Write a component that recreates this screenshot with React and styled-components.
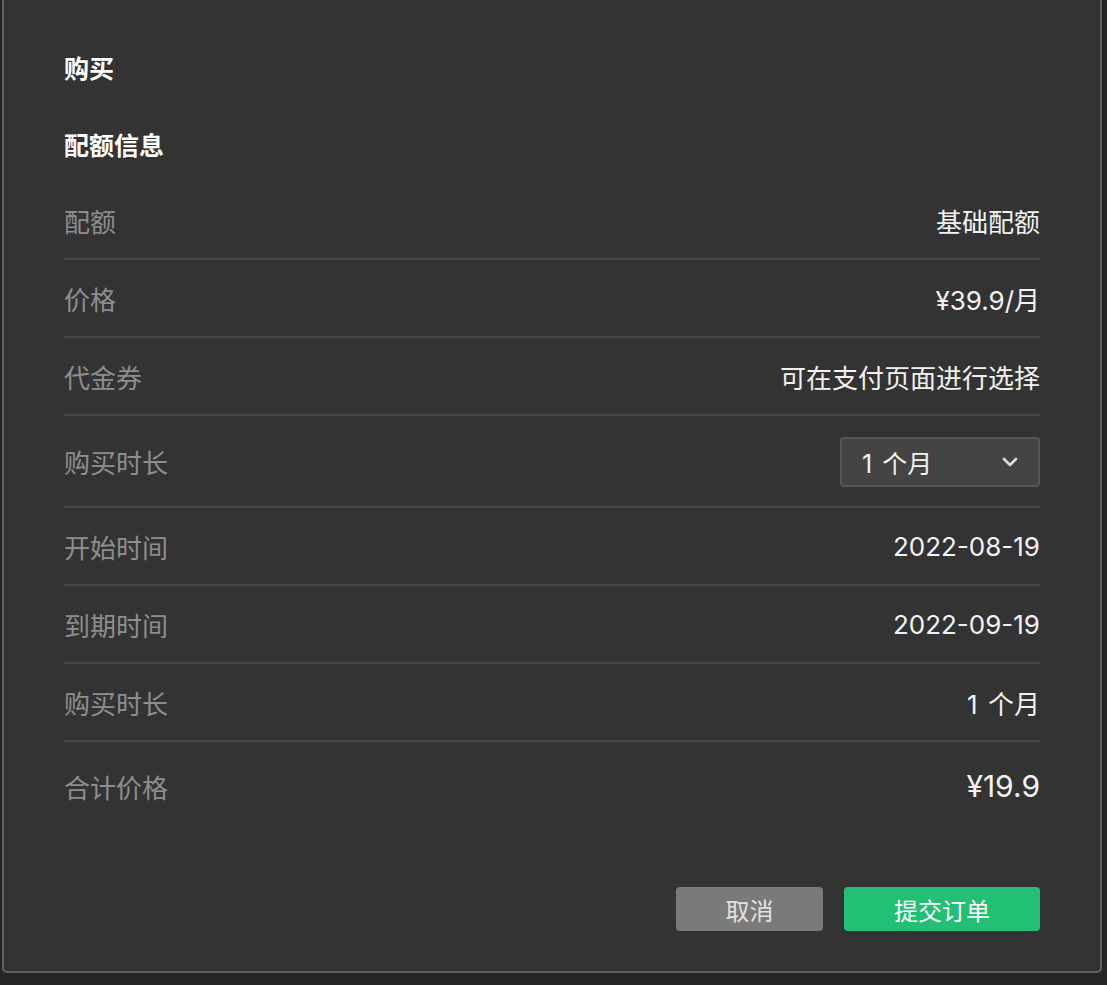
import React from 'react';
import styled, { createGlobalStyle } from 'styled-components';

const GlobalStyle = createGlobalStyle`
  html, body {
    margin: 0;
    padding: 0;
    background: #262626;
  }
  body {
    font-family: Inter, "Noto Sans CJK SC", "Noto Sans", sans-serif;
    -webkit-font-smoothing: antialiased;
  }
`;

const Page = styled.div`
  width: 1107px;
  height: 985px;
  padding-left: 2px;
  box-sizing: border-box;
  overflow: hidden;
`;

const Dialog = styled.div`
  width: 1100px;
  height: 973px;
  box-sizing: border-box;
  background: #333333;
  border: 2px solid #5f5f5f;
  border-top: none;
  border-radius: 0 0 5px 5px;
  padding: 51px 60px 0 60px;
  display: flex;
  flex-direction: column;
`;

const Title = styled.h1`
  margin: 0;
  font-size: 25px;
  line-height: 36px;
  font-weight: 700;
  color: #ffffff;
`;

const SectionTitle = styled.h2`
  margin: 41px 0 18px;
  font-size: 25px;
  line-height: 36px;
  font-weight: 700;
  color: #ffffff;
`;

const Row = styled.div`
  display: flex;
  align-items: center;
  justify-content: space-between;
  height: ${p => p.$height || 78}px;
  box-sizing: border-box;
  border-bottom: ${p => (p.$last ? 'none' : '2px solid #474747')};
  padding-top: ${p => (p.$last ? 0 : 1)}px;
`;

const Label = styled.span`
  font-size: 26px;
  color: #8e8e8e;
`;

const Value = styled.span`
  font-size: ${p => (p.$big ? 30 : 26)}px;
  color: #f2f2f2;
  font-weight: 400;
  word-spacing: 3px;
`;

const Select = styled.button`
  width: 200px;
  height: 50px;
  box-sizing: border-box;
  display: flex;
  align-items: center;
  justify-content: space-between;
  padding: 0 20px 0 20px;
  background: #444444;
  border: 2px solid #555555;
  border-radius: 4px;
  color: #f2f2f2;
  font-family: inherit;
  font-size: 25px;
  word-spacing: 3px;
  cursor: pointer;
`;

const Footer = styled.div`
  display: flex;
  justify-content: flex-end;
  gap: 21px;
  margin-top: 57px;
`;

const Button = styled.button`
  width: ${p => p.$width}px;
  height: 44px;
  border: none;
  border-radius: 4px;
  font-family: inherit;
  font-size: 24px;
  color: ${p => (p.$primary ? '#ffffff' : '#e2e2e2')};
  background: ${p => (p.$primary ? '#22c074' : '#7a7a7a')};
  cursor: pointer;
`;

const Chevron = () => (
  <svg width="16" height="10" viewBox="0 0 16 10" fill="none">
    <path d="M2 2l6 6 6-6" stroke="#dcdcdc" strokeWidth="2.6" strokeLinecap="round" strokeLinejoin="round" />
  </svg>
);

const rows = [
  ['配额', '基础配额'],
  ['价格', '¥39.9/月'],
  ['代金券', '可在支付页面进行选择'],
];

const rows2 = [
  ['开始时间', '2022-08-19'],
  ['到期时间', '2022-09-19'],
  ['购买时长', '1 个月'],
];

export default function App() {
  return (
    <>
      <GlobalStyle />
      <Page>
        <Dialog>
          <Title>购买</Title>
          <SectionTitle>配额信息</SectionTitle>
          {rows.map(([l, v]) => (
            <Row key={l}>
              <Label>{l}</Label>
              <Value>{v}</Value>
            </Row>
          ))}
          <Row $height={92}>
            <Label>购买时长</Label>
            <Select>
              <span>1 个月</span>
              <Chevron />
            </Select>
          </Row>
          {rows2.map(([l, v]) => (
            <Row key={l}>
              <Label>{l}</Label>
              <Value>{v}</Value>
            </Row>
          ))}
          <Row $height={88} $last>
            <Label>合计价格</Label>
            <Value $big>¥19.9</Value>
          </Row>
          <Footer>
            <Button $width={147}>取消</Button>
            <Button $width={196} $primary>提交订单</Button>
          </Footer>
        </Dialog>
      </Page>
    </>
  );
}
